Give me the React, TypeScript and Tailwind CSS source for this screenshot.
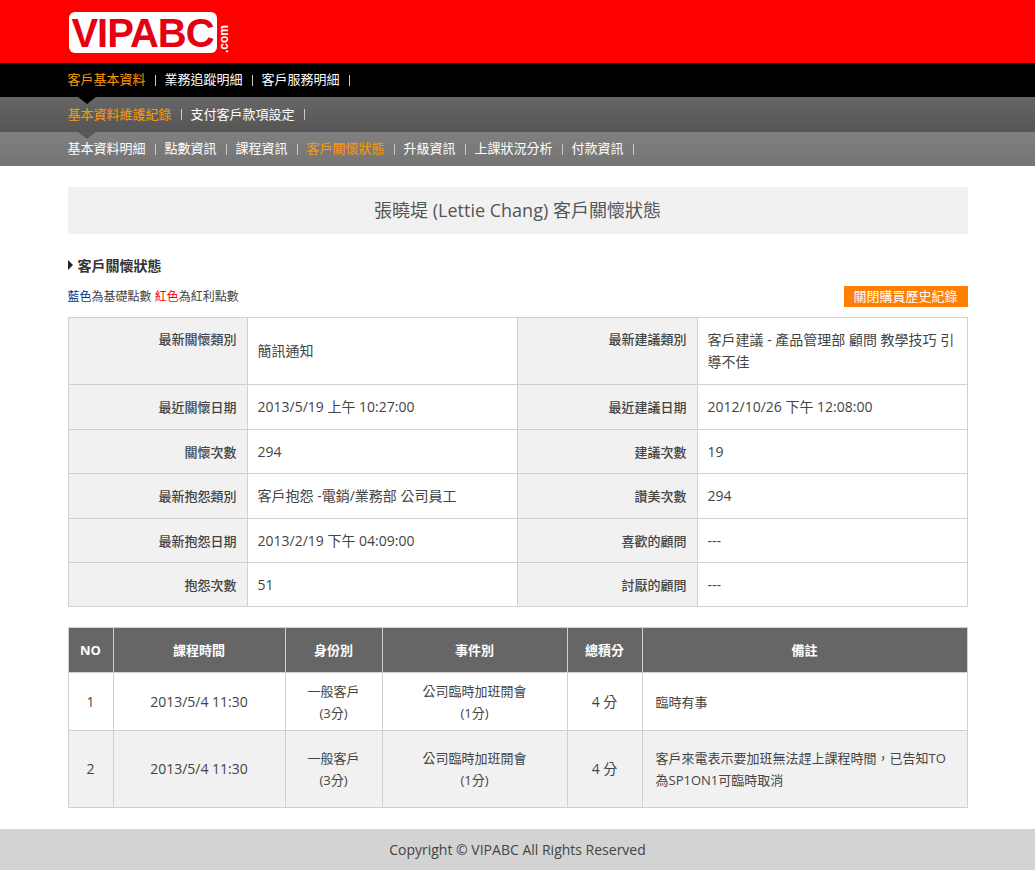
const mainNav = [
  { text: '客戶基本資料', active: true },
  { text: '業務追蹤明細' },
  { text: '客戶服務明細' },
];
const subNav = [{ text: '基本資料維護紀錄', active: true }, { text: '支付客戶款項設定' }];
const thirdNav = [
  { text: '基本資料明細' },
  { text: '點數資訊' },
  { text: '課程資訊' },
  { text: '客戶關懷狀態', active: true },
  { text: '升級資訊' },
  { text: '上課狀況分析' },
  { text: '付款資訊' },
];

const careRows = [
  { h: 'h-[67px]', a: '最新關懷類別', b: '簡訊通知', c: '最新建議類別', d: '客戶建議 - 產品管理部 顧問 教學技巧 引導不佳', top: true },
  { h: 'h-[45px]', a: '最近關懷日期', b: '2013/5/19 上午 10:27:00', c: '最近建議日期', d: '2012/10/26 下午 12:08:00' },
  { h: 'h-[44px]', a: '關懷次數', b: '294', c: '建議次數', d: '19' },
  { h: 'h-[45px]', a: '最新抱怨類別', b: '客戶抱怨 -電銷/業務部 公司員工', c: '讚美次數', d: '294' },
  { h: 'h-[44px]', a: '最新抱怨日期', b: '2013/2/19 下午 04:09:00', c: '喜歡的顧問', d: '---' },
  { h: 'h-[44px]', a: '抱怨次數', b: '51', c: '討厭的顧問', d: '---' },
];

const classRows = [
  { no: 1, note: '臨時有事', h: 'h-[58px]', bg: 'bg-white' },
  { no: 2, note: '客戶來電表示要加班無法趕上課程時間，已告知TO為SP1ON1可臨時取消', h: 'h-[77px]', bg: 'bg-[#f1f1f1]' },
];

function NavBar({
  items,
  className,
  notch,
}: {
  items: { text: string; active?: boolean }[];
  className: string;
  notch?: string;
}) {
  return (
    <div className={`relative ${className}`}>
      {notch && (
        <div
          className={`absolute left-[78px] top-0 h-0 w-0 border-x-[9px] border-t-[7px] border-x-transparent ${notch}`}
        />
      )}
      <ul className="mx-auto flex h-full w-[900px] items-center">
        {items.map((item) => (
          <li key={item.text} className="flex items-center">
            <span className={item.active ? 'text-[#ff9900]' : 'text-white'}>{item.text}</span>
            <span className="mx-[9px] h-[11px] w-px bg-[#c8c8c8]" />
          </li>
        ))}
      </ul>
    </div>
  );
}

export default function App() {
  return (
    <div className="flex min-h-[870px] flex-col bg-white font-['Open_Sans','Noto_Sans_CJK_TC',sans-serif] text-[13px] text-[#444]">
      <header className="h-[63px] bg-[#ff0000]">
        <div className="mx-auto flex w-[900px] pt-3">
          <div className="ml-px flex h-[41px] w-[148px] items-center justify-center overflow-hidden rounded-[6px] bg-white font-['Liberation_Sans',sans-serif] text-[40px] font-bold tracking-[-1px] text-[#e60012]">
            VIPABC
          </div>
          <div className="mt-[3px] ml-[2px] font-['Liberation_Sans',sans-serif] text-[12px] leading-[10px] font-bold text-white [writing-mode:vertical-rl] rotate-180">
            .com
          </div>
        </div>
      </header>
      <NavBar items={mainNav} className="h-[34px] bg-black" />
      <NavBar
        items={subNav}
        className="h-[35px] bg-gradient-to-b from-[#666666] to-[#555555]"
        notch="border-t-black"
      />
      <NavBar
        items={thirdNav}
        className="h-[34px] bg-gradient-to-b from-[#808080] to-[#747474]"
        notch="border-t-[#585858]"
      />

      <main className="mx-auto w-[900px] grow pt-[21px]">
        <h1 className="flex h-[47px] items-center justify-center bg-[#f1f1f1] text-[18px] font-normal text-[#555]">
          張曉堤 (Lettie Chang) 客戶關懷狀態
        </h1>

        <h2 className="mt-[21px] flex h-[20px] items-center text-[14px] font-bold text-[#333]">
          <span className="mr-[5px] h-0 w-0 border-y-[5px] border-l-[5px] border-y-transparent border-l-[#222]" />
          客戶關懷狀態
        </h2>

        <div className="mt-[11px] flex h-[21px] items-center justify-between text-[12px]">
          <p>
            <span className="text-[#003399]">藍色</span>為基礎點數 <span className="text-[#ff0000]">紅色</span>為紅利點數
          </p>
          <button className="h-[21px] w-[124px] bg-[#ff7f00] text-center text-[13px] text-white">關閉購買歷史紀錄</button>
        </div>

        <table className="mt-[10px] w-[900px] table-fixed border-collapse leading-[22px]">
          <colgroup>
            <col className="w-[179px]" />
            <col className="w-[270px]" />
            <col className="w-[180px]" />
            <col />
          </colgroup>
          <tbody>
            {careRows.map((row) => (
              <tr key={row.a} className={row.h}>
                <th className={`border border-[#d0d0d0] bg-[#f1f1f1] px-[10px] text-right font-medium ${row.top ? 'pt-[10px] align-top' : ''}`}>
                  {row.a}
                </th>
                <td className="border border-[#d0d0d0] px-[10px] text-[14px]">{row.b}</td>
                <th className={`border border-[#d0d0d0] bg-[#f1f1f1] px-[10px] text-right font-medium ${row.top ? 'pt-[10px] align-top' : ''}`}>
                  {row.c}
                </th>
                <td className="border border-[#d0d0d0] px-[10px] text-[14px]">{row.d}</td>
              </tr>
            ))}
          </tbody>
        </table>

        <table className="mt-[20px] w-[900px] table-fixed border-collapse leading-[22px]">
          <colgroup>
            <col className="w-[45px]" />
            <col className="w-[172px]" />
            <col className="w-[97px]" />
            <col className="w-[185px]" />
            <col className="w-[75px]" />
            <col />
          </colgroup>
          <thead>
            <tr className="h-[45px] bg-[#666666] text-white">
              {['NO', '課程時間', '身份別', '事件別', '總積分', '備註'].map((label) => (
                <th key={label} className="border border-[#d0d0d0] text-center font-bold">
                  {label}
                </th>
              ))}
            </tr>
          </thead>
          <tbody>
            {classRows.map((row) => (
              <tr key={row.no} className={`${row.h} ${row.bg} text-center`}>
                <td className="border border-[#d0d0d0] text-[14px]">{row.no}</td>
                <td className="border border-[#d0d0d0] text-[14px]">2013/5/4 11:30</td>
                <td className="border border-[#d0d0d0]">
                  一般客戶
                  <br />
                  (3分)
                </td>
                <td className="border border-[#d0d0d0]">
                  公司臨時加班開會
                  <br />
                  (1分)
                </td>
                <td className="border border-[#d0d0d0] text-[14px]">4 分</td>
                <td className="border border-[#d0d0d0] px-[13px] text-left">{row.note}</td>
              </tr>
            ))}
          </tbody>
        </table>
      </main>

      <footer className="flex h-[41px] items-center justify-center bg-[#d3d3d3] text-[14px] text-[#444]">
        Copyright © VIPABC All Rights Reserved
      </footer>
    </div>
  );
}
